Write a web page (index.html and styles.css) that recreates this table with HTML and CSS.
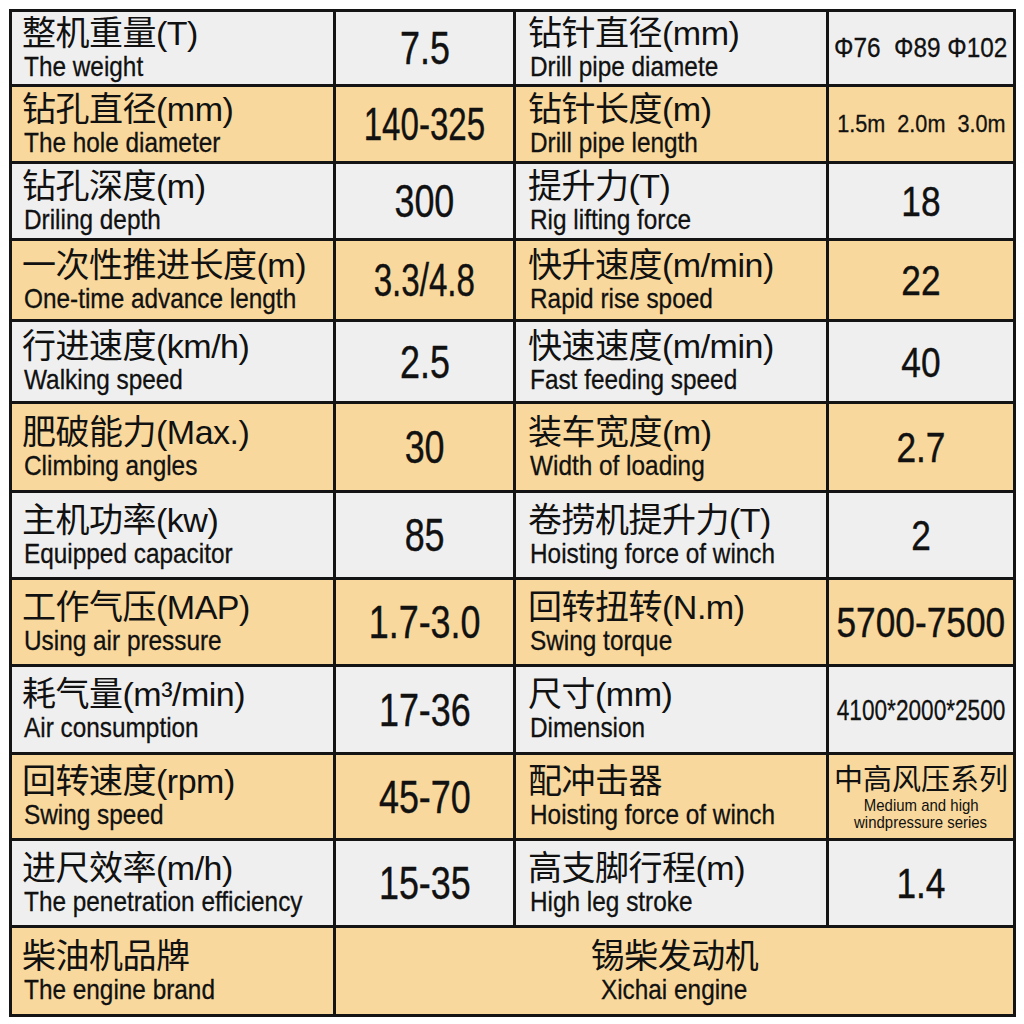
FILE: index.html
```html
<!DOCTYPE html>
<html lang="zh">
<head>
<meta charset="utf-8">
<title>参数表</title>
<link rel="stylesheet" href="styles.css">
</head>
<body>
<div class="sheet">
  <div class="cell g label"><div class="zh">整机重量(T)</div><div class="en">The weight</div></div>
  <div class="cell g value"><span class="num">7.5</span></div>
  <div class="cell g label c3"><div class="zh">钻针直径(mm)</div><div class="en">Drill pipe diamete</div></div>
  <div class="cell g value"><span class="num phi">Φ76&nbsp;&nbsp;Φ89 Φ102</span></div>

  <div class="cell o label"><div class="zh">钻孔直径(mm)</div><div class="en">The hole diameter</div></div>
  <div class="cell o value"><span class="num tight">140-325</span></div>
  <div class="cell o label c3"><div class="zh">钻针长度(m)</div><div class="en">Drill pipe length</div></div>
  <div class="cell o value"><span class="num len">1.5m&nbsp;&nbsp;2.0m&nbsp;&nbsp;3.0m</span></div>

  <div class="cell g label"><div class="zh">钻孔深度(m)</div><div class="en">Driling depth</div></div>
  <div class="cell g value"><span class="num">300</span></div>
  <div class="cell g label c3"><div class="zh">提升力(T)</div><div class="en">Rig lifting force</div></div>
  <div class="cell g value"><span class="num r4">18</span></div>

  <div class="cell o label"><div class="zh">一次性推进长度(m)</div><div class="en">One-time advance length</div></div>
  <div class="cell o value"><span class="num tight">3.3/4.8</span></div>
  <div class="cell o label c3"><div class="zh">快升速度(m/min)</div><div class="en">Rapid rise spoed</div></div>
  <div class="cell o value"><span class="num r4">22</span></div>

  <div class="cell g label"><div class="zh">行进速度(km/h)</div><div class="en">Walking speed</div></div>
  <div class="cell g value"><span class="num">2.5</span></div>
  <div class="cell g label c3"><div class="zh">快速速度(m/min)</div><div class="en">Fast feeding speed</div></div>
  <div class="cell g value"><span class="num r4">40</span></div>

  <div class="cell o label"><div class="zh">肥破能力(Max.)</div><div class="en">Climbing angles</div></div>
  <div class="cell o value"><span class="num">30</span></div>
  <div class="cell o label c3"><div class="zh">装车宽度(m)</div><div class="en">Width of loading</div></div>
  <div class="cell o value"><span class="num r4">2.7</span></div>

  <div class="cell g label"><div class="zh">主机功率(kw)</div><div class="en">Equipped capacitor</div></div>
  <div class="cell g value"><span class="num">85</span></div>
  <div class="cell g label c3"><div class="zh">卷捞机提升力(T)</div><div class="en">Hoisting force of winch</div></div>
  <div class="cell g value"><span class="num r4">2</span></div>

  <div class="cell o label"><div class="zh">工作气压(MAP)</div><div class="en">Using air pressure</div></div>
  <div class="cell o value"><span class="num">1.7-3.0</span></div>
  <div class="cell o label c3"><div class="zh">回转扭转(N.m)</div><div class="en">Swing torque</div></div>
  <div class="cell o value"><span class="num r4">5700-7500</span></div>

  <div class="cell g label"><div class="zh">耗气量(m³/min)</div><div class="en">Air consumption</div></div>
  <div class="cell g value"><span class="num">17-36</span></div>
  <div class="cell g label c3"><div class="zh">尺寸(mm)</div><div class="en">Dimension</div></div>
  <div class="cell g value"><span class="num dim">4100*2000*2500</span></div>

  <div class="cell o label"><div class="zh">回转速度(rpm)</div><div class="en">Swing speed</div></div>
  <div class="cell o value"><span class="num">45-70</span></div>
  <div class="cell o label c3"><div class="zh">配冲击器</div><div class="en">Hoisting force of winch</div></div>
  <div class="cell o value series"><span class="szh">中高风压系列</span><span class="sen">Medium and high</span><span class="sen">windpressure series</span></div>

  <div class="cell g label"><div class="zh">进尺效率(m/h)</div><div class="en">The penetration efficiency</div></div>
  <div class="cell g value"><span class="num">15-35</span></div>
  <div class="cell g label c3"><div class="zh">高支脚行程(m)</div><div class="en">High leg stroke</div></div>
  <div class="cell g value"><span class="num r4">1.4</span></div>

  <div class="cell o label"><div class="zh">柴油机品牌</div><div class="en">The engine brand</div></div>
  <div class="cell o value wide"><span class="zh">锡柴发动机</span><span class="en mid">Xichai engine</span></div>
</div>
</body>
</html>
```
FILE: styles.css
```css
body {
  margin: 0;
  background: #ffffff;
  font-family: "Liberation Sans", "Noto Sans CJK SC", Arial, sans-serif;
  color: #111111;
}

.sheet {
  display: grid;
  grid-template-columns: 321px 177px 310px 184px;
  grid-template-rows: 72px 74px 74px 78px 79px 86px 84px 84px 85px 83px 84px 86px;
  gap: 3px;
  padding: 3px;
  background: #141414;
  width: max-content;
  margin: 9px 0 0 9px;
}

.cell {
  display: flex;
  flex-direction: column;
  justify-content: center;
  overflow: hidden;
}

.g { background: #efefef; }
.o { background: #f8d89c; }

.label {
  padding-left: 10px;
  padding-bottom: 3px;
}

.c3 { padding-left: 12px; }

.zh {
  font-size: 34px;
  line-height: 40px;
  letter-spacing: -0.5px;
  white-space: nowrap;
}

.en {
  font-size: 28px;
  line-height: 28px;
  white-space: nowrap;
  transform: scaleX(0.87);
  transform-origin: left center;
  margin-left: 2px;
  -webkit-text-stroke: 0.3px #111111;
}

.value {
  align-items: center;
  text-align: center;
}

.num {
  display: block;
  font-size: 46px;
  line-height: 48px;
  white-space: nowrap;
  transform: scaleX(0.78);
  -webkit-text-stroke: 0.4px #111111;
}

.num.tight { transform: scaleX(0.72); }
.num.r4 { font-size: 43px; transform: scaleX(0.82); }
.num.phi { font-size: 28px; line-height: 30px; transform: scaleX(0.87); -webkit-text-stroke: 0.3px #111111; }
.num.len { font-size: 24px; line-height: 28px; transform: scaleX(0.9); -webkit-text-stroke: 0.3px #111111; }
.num.dim { font-size: 29px; line-height: 30px; transform: scaleX(0.78); -webkit-text-stroke: 0.3px #111111; }

.series .szh {
  font-size: 29px;
  line-height: 34px;
  white-space: nowrap;
}

.series .sen {
  display: block;
  font-size: 17px;
  line-height: 17px;
  white-space: nowrap;
  transform: scaleX(0.88);
}

.wide {
  grid-column: span 3;
  padding-bottom: 3px;
}

.en.mid {
  transform-origin: center center;
  margin-left: 0;
}
```
